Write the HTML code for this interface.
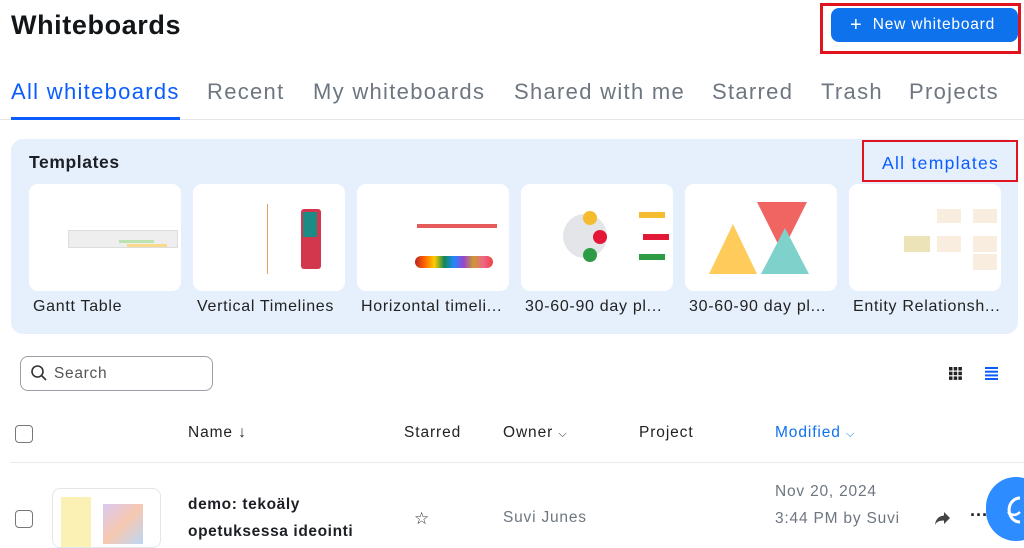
<!DOCTYPE html><html><head><style>
*{margin:0;padding:0;box-sizing:border-box}
body{width:1024px;height:541px;overflow:hidden;background:#fff;font-family:"Liberation Sans",sans-serif;color:#222;position:relative}
.a{position:absolute;white-space:nowrap}
.tab{position:absolute;top:79px;font-size:22px;color:#6e7680;letter-spacing:1.3px}
.card{position:absolute;top:184px;width:152px;height:107px;background:#fff;border-radius:9px;overflow:hidden}
.lab{position:absolute;top:298px;font-size:16px;color:#222;letter-spacing:0.7px}
.hd{position:absolute;top:424px;font-size:15.5px;color:#222;letter-spacing:0.9px}
.cb{position:absolute;width:18px;height:18px;border:1.5px solid #777;border-radius:4px;background:#fff}
</style></head><body>
<div class="a" style="left:11px;top:10px;font-size:27px;font-weight:bold;color:#131619;letter-spacing:0.6px">Whiteboards</div>
<div class="a" style="left:820px;top:3px;width:201px;height:51px;border:3px solid #e0141e"></div>
<div class="a" style="left:831px;top:8px;width:187px;height:34px;background:#0e72ed;border-radius:8px;color:#fff;font-size:15.5px;line-height:34px;padding-left:19px;letter-spacing:0.8px"><span style="font-size:20px;vertical-align:-2px">+</span>&nbsp; New whiteboard</div>
<div class="tab" style="left:11px;color:#0b5cff">All whiteboards</div>
<div class="tab" style="left:207px">Recent</div>
<div class="tab" style="left:313px">My whiteboards</div>
<div class="tab" style="left:514px">Shared with me</div>
<div class="tab" style="left:712px">Starred</div>
<div class="tab" style="left:821px">Trash</div>
<div class="tab" style="left:909px">Projects</div>
<div class="a" style="left:0;top:119px;width:1024px;height:1px;background:#e4e6ea"></div>
<div class="a" style="left:11px;top:117px;width:169px;height:3px;background:#0b5cff"></div>
<div class="a" style="left:11px;top:139px;width:1007px;height:195px;background:#e6f0fc;border-radius:12px"></div>
<div class="a" style="left:29px;top:152px;font-size:17.5px;font-weight:bold;color:#1d1f24;letter-spacing:0.6px">Templates</div>
<div class="a" style="left:862px;top:140px;width:156px;height:42px;border:2px solid #e0141e"></div>
<div class="a" style="left:882px;top:153px;font-size:17.5px;color:#0b5cff;letter-spacing:1.3px">All templates</div>
<div class="card" style="left:29px"><div class="a" style="left:39px;top:46px;width:110px;height:18px;background:#eee;border:1px solid #ddd"></div><div class="a" style="left:90px;top:56px;width:35px;height:3px;background:#bde3b3"></div><div class="a" style="left:98px;top:60px;width:40px;height:3px;background:#f9d98a"></div></div>
<div class="card" style="left:193px"><div class="a" style="left:74px;top:20px;width:1px;height:70px;background:#e5a060"></div><div class="a" style="left:108px;top:25px;width:20px;height:60px;background:#d2374e;border-radius:3px"></div><div class="a" style="left:110px;top:28px;width:14px;height:25px;background:#1b8b86"></div></div>
<div class="card" style="left:357px"><div class="a" style="left:60px;top:40px;width:80px;height:4px;background:#e55a5a"></div><div class="a" style="left:58px;top:72px;width:78px;height:12px;background:linear-gradient(90deg,#b22,#f60,#fc0,#185,#28f,#94c,#c93,#e68,#e44);border-radius:6px"></div></div>
<div class="card" style="left:521px"><div class="a" style="left:42px;top:30px;width:44px;height:44px;border-radius:50%;background:#e3e5e8"></div><div class="a" style="left:62px;top:27px;width:14px;height:14px;border-radius:50%;background:#f5bc2f"></div><div class="a" style="left:72px;top:46px;width:14px;height:14px;border-radius:50%;background:#e31837"></div><div class="a" style="left:62px;top:64px;width:14px;height:14px;border-radius:50%;background:#2e9c45"></div><div class="a" style="left:118px;top:28px;width:26px;height:6px;background:#f5bc2f"></div><div class="a" style="left:122px;top:50px;width:26px;height:6px;background:#e31837"></div><div class="a" style="left:118px;top:70px;width:26px;height:6px;background:#2e9c45"></div></div>
<div class="card" style="left:685px"><svg class="a" style="left:0;top:0" width="152" height="107"><polygon points="72,18 122,18 97,68" fill="#f06462"/><polygon points="48,40 24,90 72,90" fill="#ffcc5c"/><polygon points="100,44 76,90 124,90" fill="#7fd1cc"/></svg></div>
<div class="card" style="left:849px"><div class="a" style="left:88px;top:25px;width:24px;height:14px;background:#f9ede0"></div><div class="a" style="left:124px;top:25px;width:24px;height:14px;background:#f9ede0"></div><div class="a" style="left:55px;top:52px;width:26px;height:16px;background:#ece3b8"></div><div class="a" style="left:88px;top:52px;width:24px;height:16px;background:#f9ede0"></div><div class="a" style="left:124px;top:52px;width:24px;height:16px;background:#f9ede0"></div><div class="a" style="left:124px;top:70px;width:24px;height:16px;background:#f9ede0"></div></div>
<div class="lab" style="left:33px">Gantt Table</div>
<div class="lab" style="left:197px">Vertical Timelines</div>
<div class="lab" style="left:361px">Horizontal timeli...</div>
<div class="lab" style="left:525px">30-60-90 day pl...</div>
<div class="lab" style="left:689px">30-60-90 day pl...</div>
<div class="lab" style="left:853px">Entity Relationsh...</div>
<div class="a" style="left:20px;top:356px;width:193px;height:35px;border:1px solid #9aa0a6;border-radius:8px"></div>
<svg class="a" style="left:30px;top:364px" width="18" height="18"><circle cx="7.5" cy="7.5" r="5.5" fill="none" stroke="#333" stroke-width="1.6"/><line x1="11.5" y1="11.5" x2="16" y2="16" stroke="#333" stroke-width="1.6"/></svg>
<div class="a" style="left:54px;top:365px;font-size:15.5px;color:#555;letter-spacing:0.7px">Search</div>
<svg class="a" style="left:949px;top:367px" width="13" height="13" fill="#222"><rect x="0" y="0" width="3.5" height="3.5"/><rect x="4.7" y="0" width="3.5" height="3.5"/><rect x="9.4" y="0" width="3.5" height="3.5"/><rect x="0" y="4.7" width="3.5" height="3.5"/><rect x="4.7" y="4.7" width="3.5" height="3.5"/><rect x="9.4" y="4.7" width="3.5" height="3.5"/><rect x="0" y="9.4" width="3.5" height="3.5"/><rect x="4.7" y="9.4" width="3.5" height="3.5"/><rect x="9.4" y="9.4" width="3.5" height="3.5"/></svg>
<svg class="a" style="left:985px;top:367px" width="13" height="13" fill="#0b5cff"><rect y="0" width="13" height="2"/><rect y="3.7" width="13" height="2"/><rect y="7.4" width="13" height="2"/><rect y="11" width="13" height="2"/></svg>
<div class="cb" style="left:15px;top:425px"></div>
<div class="hd" style="left:188px">Name ↓</div>
<div class="hd" style="left:404px">Starred</div>
<div class="hd" style="left:503px">Owner <span style="font-size:11px">⌵</span></div>
<div class="hd" style="left:639px">Project</div>
<div class="hd" style="left:775px;color:#0e72ed">Modified <span style="font-size:11px">⌵</span></div>
<div class="a" style="left:10px;top:462px;width:1014px;height:1px;background:#e8eaed"></div>
<div class="cb" style="left:15px;top:510px"></div>
<div class="a" style="left:52px;top:488px;width:109px;height:60px;border:1px solid #e4e6ea;border-radius:8px;background:#fff;overflow:hidden"><div class="a" style="left:8px;top:8px;width:30px;height:50px;background:#fbf1b5"></div><div class="a" style="left:50px;top:15px;width:40px;height:40px;background:linear-gradient(135deg,#d9c9f2,#f6c8b0,#bcd7f5)"></div></div>
<div class="a" style="left:188px;top:491px;font-size:15.5px;font-weight:bold;color:#1d1f24;line-height:27px;letter-spacing:0.6px">demo: tekoäly<br>opetuksessa ideointi</div>
<div class="a" style="left:414px;top:509px;font-size:17px;color:#333">☆</div>
<div class="a" style="left:503px;top:509px;font-size:15.5px;color:#6e7680;letter-spacing:0.8px">Suvi Junes</div>
<div class="a" style="left:775px;top:478px;font-size:15.5px;color:#6e7680;line-height:27px;letter-spacing:0.8px">Nov 20, 2024<br>3:44 PM by Suvi</div>
<svg class="a" style="left:934px;top:511px" width="17" height="15"><path d="M10 1 L16 7 L10 13 L10 9.5 C5 9.5 2.5 11 1 14 C1.5 8.5 4.5 5 10 4.5 Z" fill="#444"/></svg>
<div class="a" style="left:970px;top:505px;font-size:18px;font-weight:bold;color:#222">···</div>
<div class="a" style="left:986px;top:477px;width:60px;height:64px;border-radius:30px;background:#2d8cff"></div>
<svg class="a" style="left:1002px;top:492px" width="22" height="36"><path d="M18 6 A10 11 0 1 0 18 30" fill="none" stroke="#fff" stroke-width="3"/><path d="M6 20 Q12 26 18 20" fill="none" stroke="#fff" stroke-width="2.5"/></svg>
</body></html>
